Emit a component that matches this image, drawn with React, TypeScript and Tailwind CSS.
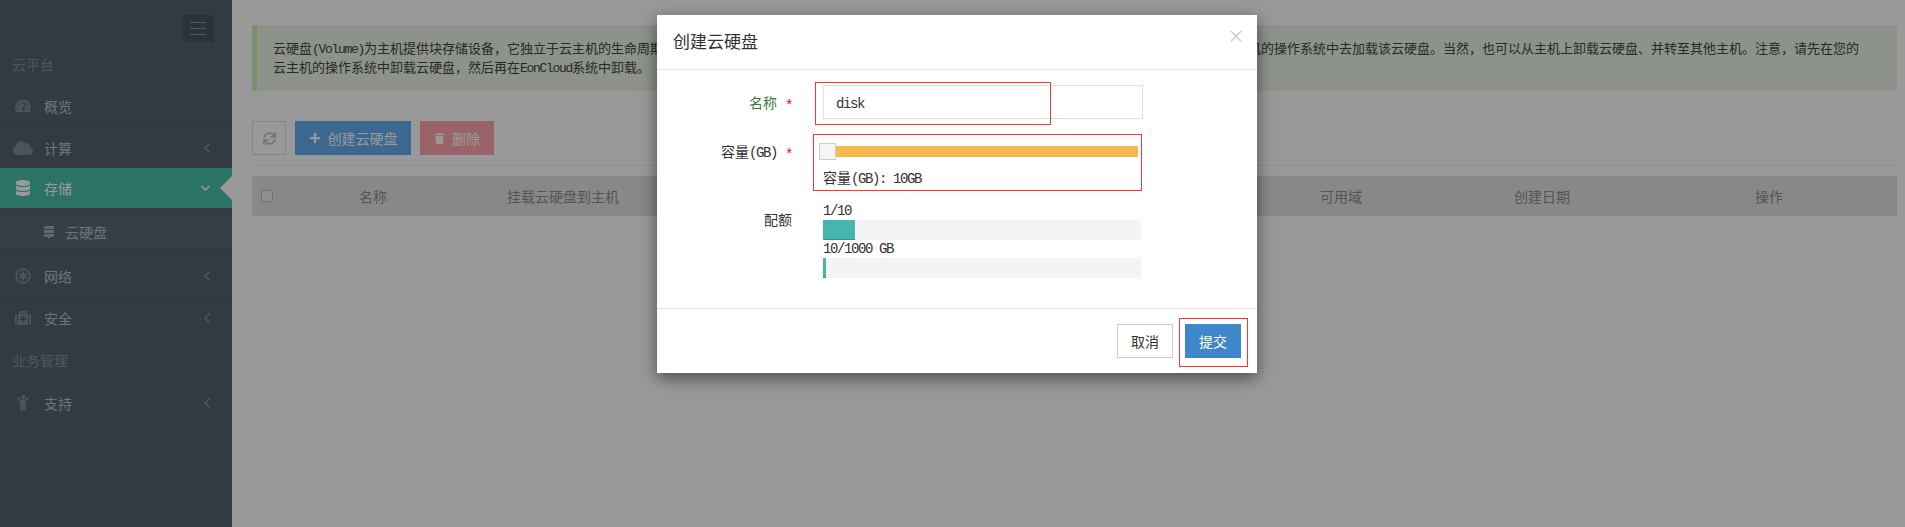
import type { ReactNode } from 'react';
import {
  FaChild,
  FaCloud,
  FaDatabase,
  FaMedkit,
  FaPlus,
  FaSync,
  FaTachometerAlt,
  FaTrash,
} from 'react-icons/fa';

// Latin text in the screenshot is half width, so squeeze the mono font a bit
const Latin = ({ children }: { children: ReactNode }) => (
  <span className="font-['Liberation_Mono'] tracking-[-0.1em]">{children}</span>
);

const NetworkIcon = () => (
  <svg viewBox="0 0 16 16" className="h-4 w-4" fill="none" stroke="currentColor">
    <circle cx="8" cy="8" r="6.8" strokeWidth="1.7" />
    <path d="M8 3.5v9M4.2 5.8l7.6 4.4M11.8 5.8l-7.6 4.4" strokeWidth="2" />
  </svg>
);

const DiskIcon = () => (
  <svg viewBox="0 0 10 13" className="h-[13px] w-[10px]" fill="currentColor">
    <path d="M1 0h8l1 1v2H0V1zM0 4h10v3H0zM0 8h10v2l-1 1H6.5L5 12.5 3.5 11H1l-1-1z" />
  </svg>
);

const ChevronLeft = () => (
  <svg viewBox="0 0 6 10" className="h-[10px] w-[6px] text-[#8e98a8]" fill="none" stroke="currentColor">
    <path d="M5.5 0.5 1 5l4.5 4.5" strokeWidth="1.2" />
  </svg>
);

const ChevronDown = () => (
  <svg viewBox="0 0 9 6" className="-ml-[2px] h-[6px] w-[9px]" fill="none" stroke="currentColor">
    <path d="M0.5 1 4.5 5 8.5 1" strokeWidth="1.5" />
  </svg>
);

const navTop = [
  { label: '概览', icon: <FaTachometerAlt size={16} />, arrow: false, line: true },
  { label: '计算', icon: <FaCloud size={20} />, arrow: true, line: false },
];

const NavRow = ({ label, icon, arrow, line }: { label: string; icon: ReactNode; arrow: boolean; line: boolean }) => (
  <div className={`flex h-[41px] items-center pl-[12px] pr-[22px] text-[#b9c1cd] ${line ? 'border-b border-[#4e5a69]' : ''}`}>
    <span className="flex w-[22px] shrink-0 items-center justify-center text-[#7e8a9c]">{icon}</span>
    <span className="ml-[10px] flex-1 text-sm">{label}</span>
    {arrow && <ChevronLeft />}
  </div>
);

const Sidebar = () => (
  <aside className="flex w-[232px] shrink-0 flex-col bg-[#556170]">
    <div className="flex justify-end pr-[19px] pt-[15px]">
      <div className="flex h-[27px] w-[30px] flex-col items-center justify-center gap-[5px] bg-[#4a5460]">
        <span className="h-px w-4 bg-[#8a94a2]" />
        <span className="h-px w-4 bg-[#8a94a2]" />
        <span className="h-px w-4 bg-[#8a94a2]" />
      </div>
    </div>
    <div className="flex h-[44px] items-center pl-[12px] text-sm text-[#858f9d]">云平台</div>
    {navTop.map((item) => (
      <NavRow key={item.label} {...item} />
    ))}
    <div className="relative flex h-[40px] items-center bg-[#46c0a8] pl-[12px] pr-[22px] text-white">
      <span className="flex w-[22px] shrink-0 items-center justify-center">
        <FaDatabase size={16} />
      </span>
      <span className="ml-[10px] flex-1 text-sm">存储</span>
      <ChevronDown />
      <span className="absolute right-0 top-[8px] border-y-[12px] border-r-[12px] border-y-transparent border-r-white" />
    </div>
    <div className="border-b border-[#4e5a69] pb-[7px] pt-[8px]">
      <div className="flex h-[32px] items-center bg-[#5c6878] pl-[44px] text-sm text-[#b9c1cd]">
        <span className="text-[#a5aebb]">
          <DiskIcon />
        </span>
        <span className="ml-[11px]">云硬盘</span>
      </div>
    </div>
    <NavRow label="网络" icon={<NetworkIcon />} arrow line />
    <NavRow label="安全" icon={<FaMedkit size={16} />} arrow line={false} />
    <div className="flex h-[44px] items-center pl-[12px] text-sm text-[#858f9d]">业务管理</div>
    <NavRow label="支持" icon={<FaChild size={16} />} arrow line={false} />
  </aside>
);

const Content = () => (
  <main className="flex-1 pl-[20px] pr-[8px] pt-[25px]">
    <div className="h-[66px] border-l-[5px] border-[#cdeeb6] bg-[#ebf5e8] pl-[16px] pr-[10px] pt-[13px] text-[13px] leading-[19px] text-[#444]">
      <p className="h-[19px] whitespace-nowrap">
        云硬盘<Latin>(Volume)</Latin>为主机提供块存储设备，它独立于云主机的生命周期而存在，可以被连接到任意运行中的云主机上，为其提供持久化存储。连接后，您需要登录到相应云主机的操作系统中去加载该云硬盘。当然，也可以从主机上卸载云硬盘、并转至其他主机。注意，请先在您的
      </p>
      <p className="h-[19px] whitespace-nowrap">
        云主机的操作系统中卸载云硬盘，然后再在<Latin>EonCloud</Latin>系统中卸载。
      </p>
    </div>
    <div className="mt-[30px] flex h-[34px] items-stretch text-sm">
      <button className="flex w-[34px] items-center justify-center border border-[#ddd] text-[#c4c4c4]">
        <FaSync size={13} />
      </button>
      <button className="ml-[9px] flex w-[116px] items-center justify-center gap-[7px] bg-[#65aeef] text-white">
        <FaPlus size={12} />
        创建云硬盘
      </button>
      <button className="ml-[9px] flex w-[74px] items-center justify-center gap-[7px] bg-[#ffa6ac] text-white">
        <FaTrash size={11} />
        删除
      </button>
    </div>
    <div className="mt-[10px] h-px bg-[#eee]" />
    <div className="mt-[10px] flex h-[40px] items-center bg-[#e3e3e3] text-center text-sm text-[#8c8c8c]">
      <div className="w-[31px] pl-[9px]">
        <div className="h-[12px] w-[12px] rounded-[2px] border border-[#bbb] bg-[#eee]" />
      </div>
      <div className="w-[180px]">名称</div>
      <div className="w-[200px]">挂载云硬盘到主机</div>
      <div className="flex-1" />
      <div className="w-[204px]">可用域</div>
      <div className="w-[198px]">创建日期</div>
      <div className="w-[256px]">操作</div>
    </div>
  </main>
);

const Required = () => (
  <span className="inline-block w-[16px] translate-y-[2px] pl-[8px] font-['Liberation_Mono'] text-sm leading-none text-[#f00]">*</span>
);

const Quota = ({ label, percent }: { label: string; percent: number }) => (
  <div>
    <div className="flex h-[18px] items-center text-[#333]">
      <Latin>{label}</Latin>
    </div>
    <div className="h-[20px] w-[318px] bg-[#f4f4f4]">
      <div
        className="h-full border-b border-[#36918b] bg-[#45b6af]"
        style={{ width: `${percent}%`, minWidth: 3 }}
      />
    </div>
  </div>
);

const CreateModal = () => (
  <div className="absolute left-[657px] top-[15px] flex h-[358px] w-[600px] flex-col bg-white font-['Noto_Sans_CJK_SC',sans-serif] shadow-[0_5px_15px_rgba(0,0,0,0.5)]">
    <div className="relative flex h-[55px] shrink-0 items-center border-b border-[#e5e5e5] pb-[2px] pl-[16px] text-[17px] text-[#333]">
      创建云硬盘
      <span className="absolute right-[12px] top-[11px] text-lg leading-[18px] text-[#c8c8c8]">×</span>
    </div>

    <div className="flex-1 text-sm leading-[20px]">
      <div className="mt-[15px] flex h-[34px] items-center">
        <div className="w-[136px] text-right text-[#3c763d]">
          名称
          <Required />
        </div>
        <div className="relative ml-[30px] h-[34px] w-[320px] border border-[#d6e9c6] pl-[12px] leading-[32px] text-[#333]">
          <Latin>disk</Latin>
          <div className="absolute left-[-9px] top-[-4px] h-[43px] w-[236px] border border-[#f33]" />
        </div>
      </div>

      <div className="mt-[15px] flex">
        <div className="w-[136px] whitespace-nowrap pt-[7px] text-right text-[#333]">
          容量<Latin>(GB)</Latin>
          <Required />
        </div>
        <div className="ml-[20px] h-[57px] w-[329px] border border-[#f33]">
          <div className="ml-[5px] mt-[8px] flex h-[17px] items-center">
            <div className="h-[17px] w-[17px] shrink-0 border border-[#ccc] bg-[#f5f5f5]" />
            <div className="h-[11px] w-[302px] bg-[#f8b84e]" />
          </div>
          <div className="ml-[9px] mt-[7px] whitespace-pre text-[#333]">
            容量<Latin>(GB): 10GB</Latin>
          </div>
        </div>
      </div>

      <div className="mt-[11px] flex">
        <div className="mt-[7px] w-[136px] pr-[1px] text-right text-[#333]">配额</div>
        <div className="ml-[30px] flex flex-col">
          <Quota label="1/10" percent={10} />
          <Quota label="10/1000 GB" percent={1} />
        </div>
      </div>
    </div>

    <div className="flex h-[65px] shrink-0 items-start justify-end gap-[12px] border-t border-[#e5e5e5] pr-[16px] pt-[15px] text-sm">
      <button className="h-[34px] w-[56px] border border-[#ccc] bg-white text-[#333]">取消</button>
      <button className="relative h-[34px] w-[56px] bg-[#3f87c9] text-white">
        提交
        <span className="absolute left-[-6px] top-[-6px] h-[49px] w-[69px] border border-[#f33]" />
      </button>
    </div>
  </div>
);

export default function App() {
  return (
    <div className="relative flex h-[527px] overflow-hidden bg-white font-['Noto_Sans_CJK_SC',sans-serif]">
      <Sidebar />
      <Content />
      <div className="absolute inset-0 bg-black/40" />
      <CreateModal />
    </div>
  );
}
